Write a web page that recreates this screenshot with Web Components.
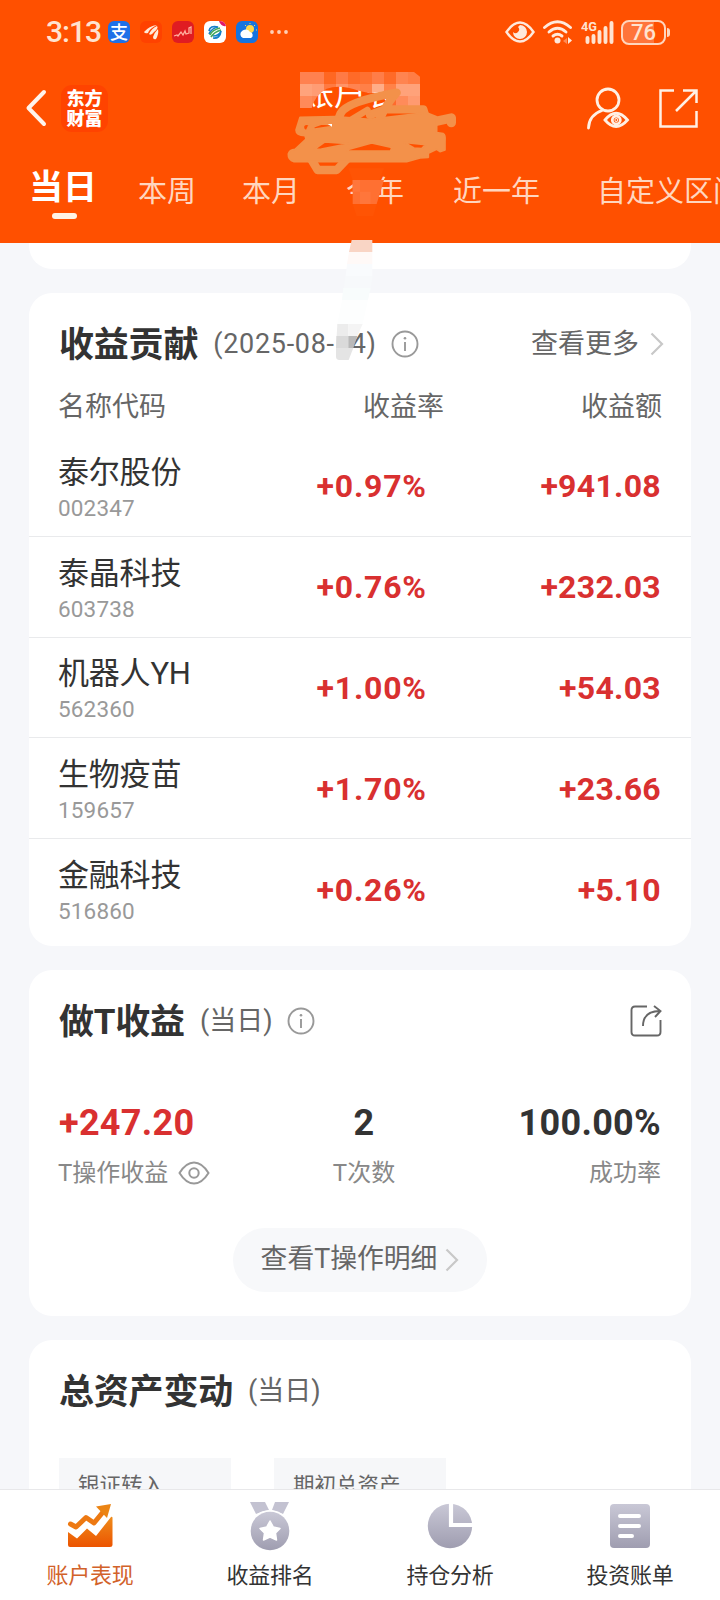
<!DOCTYPE html>
<html lang="zh-CN">
<head>
<meta charset="utf-8">
<meta name="viewport" content="width=device-width, initial-scale=1">
<title>账户表现</title>
<style>
    html, body { margin: 0; height: 100%; }
    body { background: #f6f7fa; font-family: Roboto, "Noto Sans CJK SC", sans-serif; color: #333; overflow: hidden; }
</style>
</head>
<body>
<account-page></account-page>

<script>
class BaseElement extends HTMLElement {
    constructor() {
        super();
        this.attachShadow({ mode: 'open' });
    }

    connectedCallback() {
        this.shadowRoot.innerHTML = this.render();
    }
}

class StatusBar extends BaseElement {
    render() {
        return `
        <style>
            :host { display: flex; align-items: center; justify-content: space-between; height: 64px; padding: 0 54px 0 46px; box-sizing: border-box; color: #ffe3d0; }
            .left, .right { display: flex; align-items: center; }
            .time { width: 62px; font-size: 30px; line-height: 64px; letter-spacing: -1px; font-weight: 500; white-space: nowrap; }
            .apps { display: flex; gap: 10px; }
            .app { width: 22px; height: 22px; border-radius: 6px; display: block; overflow: hidden; }
            .pay { overflow: visible; background: #1f70e8; color: #fff; font: 500 18px/21px "Noto Sans CJK SC", sans-serif; text-align: center; }
            .dots { margin-left: 12px; }
            svg { display: block; }
            .net { margin-left: 8px; }
            .battery { position: relative; width: 41px; height: 21px; border: 2px solid #ffd5bd; border-radius: 8px; margin-left: 7px; font-size: 22px; font-weight: 500; line-height: 22px; text-align: center; background: linear-gradient(90deg, #ff743a 76%, transparent 76%); }
            .battery::after { content: ""; position: absolute; left: 44px; top: 6px; width: 3px; height: 9px; border-radius: 0 3px 3px 0; background: #ffd5bd; }
        </style>
        <div class="left">
            <span class="time">3:13</span>
            <div class="apps">
                <span class="app pay">支</span>
                <svg class="app" viewBox="0 0 22 22"><rect width="22" height="22" fill="#ff4200"/><path d="M4 11Q9 5 17 4Q9 8 8 12Q5 13 4 11ZM9 13Q12 7 17 5Q19 7 14 11Q11 15 9 13ZM13 16Q14 12 18 8Q19 13 16 18Q13 19 13 16Z" fill="#ffe9d8"/></svg>
                <svg class="app" viewBox="0 0 22 22"><rect width="22" height="22" fill="#e01c22"/><path d="M2 15L5 14L6 15L9 11L11 14L13 10L14 13L17 12V7L19 6V13" fill="none" stroke="#ffb0a0" stroke-width="1.3"/></svg>
                <svg class="app" viewBox="0 0 22 22"><rect width="22" height="22" fill="#fff"/><path d="M15 0H22V5Q17 6 15 0Z" fill="#e0186a"/><g fill="none" stroke-width="1.7"><path d="M5 10Q6 4 14 6Q8 7 5 13" stroke="#1680c8"/><path d="M6 14Q8 9 16 7M7 16Q10 11 17 9" stroke="#44a85a"/><path d="M9 17Q16 18 17 10Q15 15 9 15" stroke="#1680c8"/></g></svg>
                <svg class="app" viewBox="0 0 22 22"><rect width="22" height="22" fill="#1574df"/><circle cx="14" cy="8" r="4" fill="#ffd84a"/><path d="M14 2V3M19 4L18 5M21 9H20M9 4L10 5" stroke="#ffd84a"/><path d="M7 17A4 4 0 0 1 6 10A5 5 0 0 1 14 11A3.2 3.2 0 0 1 15 17Z" fill="#fff"/></svg>
            </div>
            <svg class="dots" width="18" height="6" viewBox="0 0 18 6" fill="#ffd0b5"><circle cx="2" cy="3" r="1.9"/><circle cx="9" cy="3" r="1.9"/><circle cx="16" cy="3" r="1.9"/></svg>
        </div>
        <div class="right">
            <svg width="30" height="22" viewBox="0 0 30 22"><path d="M1.5 11Q8 1.5 15 1.5T28.5 11Q22 20.5 15 20.5T1.5 11Z" fill="none" stroke="#ffe9dc" stroke-width="2.4"/><path d="M15 4A7 7 0 1 1 8 11A3.5 3.5 0 1 0 13 6Q14 5 15 4Z" fill="#ffe9dc"/></svg>
            <svg class="net" width="30" height="24" viewBox="0 0 30 24"><g fill="none" stroke="#ffe9dc" stroke-width="2.9" stroke-linecap="round"><path d="M1.5 7.5Q14.5 -4 27.5 7.5"/><path d="M6 12Q14.5 4.500 23 12"/><path d="M10 16Q14.500 12.500 19 16"/></g><circle cx="14.500" cy="20.500" r="3" fill="#ffe9dc"/><path d="M24 18V24L20 21Z" fill="#ff8a55"/><path d="M25 17V24L29 20.500Z" fill="#ffe9dc"/></svg>
            <svg class="net" width="33" height="24" viewBox="0 0 33 24"><text x="0" y="10.500" font-size="13" font-weight="700" fill="#ffe3d0" textLength="16" lengthAdjust="spacingAndGlyphs">4G</text><path d="M6.500 18V22M12.500 16V22M18.500 12V22M24.500 8V22M30.500 3V22" stroke="#ffe3d0" stroke-width="3.900" stroke-linecap="round"/></svg>
            <span class="battery">76</span>
        </div>`;
    }
}

class NavBar extends BaseElement {
    render() {
        return `
        <style>
            :host { display: grid; grid-template-columns: 260px 1fr 260px; align-items: center; height: 88px; padding: 0 22px; box-sizing: border-box; color: #fff; }
            svg { display: block; }
            .side { display: flex; align-items: center; }
            .end { justify-content: flex-end; gap: 28px; }
            .logo { width: 47px; height: 47px; border-radius: 11px; background: #ff4300; margin-left: 13px; font: 900 18px/20px "Noto Sans CJK SC", sans-serif; text-align: center; padding-top: 2px; box-sizing: border-box; }
            .title { font-size: 32px; line-height: 32px; padding-bottom: 28px; text-align: left; margin-left: 20px; white-space: nowrap; }
        </style>
        <div class="side">
            <svg width="26" height="40" viewBox="0 0 26 40"><path d="M22 4L6.500 20L22 36" fill="none" stroke="#fff4ec" stroke-width="4" stroke-linecap="round" stroke-linejoin="round"/></svg>
            <div class="logo">东方<br>财富</div>
        </div>
        <div class="title">账户表</div>
        <div class="side end">
            <svg width="44" height="44" viewBox="0 0 44 44" fill="none" stroke="#fff0e4" stroke-width="2.800" stroke-linecap="round"><circle cx="22" cy="14" r="11"/><path d="M2.500 42Q3 29 16 24.500"/><path d="M19 34Q30 20.500 41.500 34Q30 47 19 34Z"/><circle cx="30.300" cy="34" r="4"/><circle cx="30.300" cy="34" r=".5"/></svg>
            <svg width="40" height="40" viewBox="0 0 40 40" fill="none" stroke="#fff0e4" stroke-width="2.500"><path d="M16 2.500H2.500V38.500H38.500V23"/><path d="M25 2.500H38.500V15M38 3L18 23"/></svg>
        </div>`;
    }
}

class PeriodTabs extends BaseElement {
    render() {
        return `
        <style>
            :host { display: flex; align-items: flex-start; height: 91px; padding-left: 29px; gap: 46px; box-sizing: border-box; overflow: hidden; font-size: 29px; line-height: 40px; color: #ffd6bf; white-space: nowrap; }
            span { flex: none; padding-top: 20px; }
            .active { font-size: 34px; font-weight: 700; color: #fff; padding-top: 15px; margin-right: -5px; }
            .active::after { content: ""; display: block; width: 25px; height: 6px; margin: 6px 0 0 23px; border-radius: 3px; background: #fff3e6; }
            .year { margin-left: 3px; }
            .wide { margin-left: 11px; }
        </style>
        <span class="active">当日</span>
        <span>本周</span>
        <span>本月</span>
        <span>今年</span>
        <span class="year">近一年</span>
        <span class="wide">自定义区间</span>`;
    }
}

/* mosaic blocks and brush marks lying over the header and the date */
class CensorMarks extends BaseElement {
    render() {
        const rows = [
            ['#ff8150', '#ff8150', '#ff6722', '#ff7a45', '#ff6a28', '#ff7030', '#ff7d48', '#ff6a28', '#ff8450', '#ff7d45'],
            ['#ffa37c', '#ff9c74', '#ff7a42', '#ff9468', '#ff8350', '#ff8048', '#ffad88', '#ff8248', '#ffa27a', '#ffa27a'],
            ['#ff8a5a', '#ff8450', '#ff6a2c', '#ff7a42', '#ff7a42', '#ff6a2c', '#ff7a42', '#ff6a2c', '#ff8b5a', '#ff9a70']
        ];
        const cells = rows.map((row, y) => row.map((c, x) =>
            `<rect x="${120 + x * 36}" y="${36 + y * 36}" width="36.500" height="36.500" fill="${c}"/>`).join('')).join('');
        return `
        <style>
            :host { position: absolute; left: 260px; top: 60px; pointer-events: none; }
            svg { display: block; }
        </style>
        <svg width="220" height="320" viewBox="0 0 660 960">
            <clipPath id="title"><path d="M120 36H462L480 50V144H385L412 100L385 92L330 100L296 92Q240 72 200 86Q165 105 155 144H120Z"/></clipPath>
            <g clip-path="url(#title)">${cells}</g>
            <g fill="none" stroke="#f3914a" stroke-linecap="round" stroke-linejoin="round">
                <path d="M410 98Q260 125 242 160L230 190M410 98Q380 130 358 180M330 165L375 148H490L498 175" stroke-width="25"/>
                <path d="M322 150L260 188" stroke-width="20"/>
                <path d="M155 300L173 330H230L262 296" stroke-width="25"/>
                <path d="M500 190L574 174L574 188" stroke-width="28"/>
            </g>
            <path fill="#f3914a" stroke="#f3914a" stroke-width="5" stroke-linejoin="round" fill-rule="evenodd" d="M120 172L225 170L330 178L500 158L530 170V218L550 221Q557 224 555 245V270L540 275L530 268L505 280V292L480 294L440 305H102Q84 300 85 282Q88 269 105 268L138 237L135 227Q108 226 108 210ZM130 200Q132 190 148 194L140 211Q130 211 130 200ZM162 200L185 192L215 194V200L160 208ZM194 246L268 251L184 267L163 268ZM265 268L335 249L395 262L392 273H262ZM432 247L497 254L485 266L462 264Z"/>
            <path d="M203 192H216V200Z" fill="#fff"/>
            <path d="M265 325H372L358 360H278ZM278 432H350L340 468H290Z" fill="#ff5404"/>
            <path d="M278 360H372L350 432H278Z" fill="#ff7032"/>
            <path d="M278 360H300V395H278ZM300 395H332V432H300Z" fill="#ff763b"/>
            <path d="M275 540H337V576H267Z" fill="#f9d5c5"/>
            <path d="M267 576H337V612H261Z" fill="#fff9f7"/>
            <path d="M261 612H337V648H257Z" fill="#f9fbfd"/>
            <path d="M257 648H337L332 684H252Z" fill="#f7f9fb"/>
            <path d="M250 684H332L324 720H246Z" fill="#f8fcfc"/>
            <path d="M246 720H324L308 792H232Z" fill="#fdfefe"/>
            <path d="M232 792H265V828H230Z" fill="#ececec"/>
            <path d="M265 792H308L292 828H265Z" fill="#f4f4f4"/>
            <path d="M229 828H265V864H228Z" fill="#dadada"/>
            <path d="M265 828H292L280 864H265Z" fill="#b9b9b9"/>
            <path d="M228 864H280L266 900H238Q228 898 228 890Z" fill="#e4e4e4"/>
        </svg>`;
    }
}

class InfoIcon extends BaseElement {
    render() {
        return `
        <style>:host { display: block; width: 28px; height: 28px; } svg { display: block; }</style>
        <svg width="28" height="28" viewBox="0 0 28 28"><circle cx="14" cy="14" r="12.500" fill="none" stroke="#999" stroke-width="1.900"/><path d="M14 12V21" stroke="#999" stroke-width="1.900"/><circle cx="14" cy="8.300" r="1.300" fill="#999"/></svg>`;
    }
}

class ArrowIcon extends BaseElement {
    render() {
        return `
        <style>:host { display: block; width: 14px; height: 24px; } svg { display: block; }</style>
        <svg width="14" height="24" viewBox="0 0 14 24"><path d="M1.500 1.500L12 12L1.500 22.500" fill="none" stroke="#c8c8c8" stroke-width="2.200"/></svg>`;
    }
}

class PanelCard extends BaseElement {
    render() {
        return `
        <style>
            :host { display: block; background: #fff; border-radius: 23px; margin: 0 29px 24px; box-sizing: border-box; }
            header { display: flex; align-items: center; height: 100px; padding: 0 29px 0 30px; }
            h2 { margin: 0 15px 0 0; padding-top: 6px; font-size: 35px; line-height: 50px; font-weight: 700; letter-spacing: -0.2px; white-space: nowrap; }
            .note { display: flex; align-items: center; gap: 14px; padding-top: 2px; font-size: 27px; line-height: 40px; color: #666; white-space: nowrap; }
            .action { margin-left: auto; padding-top: 2px; }
        </style>
        <header>
            <h2>${this.getAttribute('heading')}</h2>
            <div class="note"><slot name="note"></slot></div>
            <div class="action"><slot name="action"></slot></div>
        </header>
        <slot></slot>`;
    }
}

class StockRow extends BaseElement {
    render() {
        const a = name => this.getAttribute(name);
        return `
        <style>
            :host { display: grid; grid-template-columns: 201px 167px 235px; align-items: center; height: 100.750px; padding: 0 30px 0 29px; box-sizing: border-box; border-bottom: 1px solid #e9eaec; }
            :host(:last-of-type) { border-bottom: none; height: 106px; padding-bottom: 6px; }
            .name { font-size: 31px; line-height: 40px; letter-spacing: -0.2px; white-space: nowrap; margin-top: 3px; }
            .code { font-size: 22.500px; line-height: 28px; letter-spacing: 0.15px; color: #999; margin-top: 1px; }
            .value { text-align: right; font-size: 32px; line-height: 40px; font-weight: 700; letter-spacing: 0.3px; color: #d93030; padding-top: 1px; }
            .rate { letter-spacing: 0.8px; margin-right: -0.8px; }
        </style>
        <div><div class="name">${a('name')}</div><div class="code">${a('code')}</div></div>
        <div class="value rate">${a('rate')}</div>
        <div class="value">${a('amount')}</div>`;
    }
}

class ContributionCard extends BaseElement {
    render() {
        const stocks = [
            ['泰尔股份', '002347', '+0.97%', '+941.08'],
            ['泰晶科技', '603738', '+0.76%', '+232.03'],
            ['机器人YH', '562360', '+1.00%', '+54.03'],
            ['生物疫苗', '159657', '+1.70%', '+23.66'],
            ['金融科技', '516860', '+0.26%', '+5.10']
        ];
        return `
        <style>
            :host { display: block; }
            panel-card { height: 653px; }
            .date { display: flex; letter-spacing: 0.7px; }
            .gap { width: 16px; }
            .more { display: flex; align-items: center; gap: 11px; font-size: 27px; line-height: 40px; color: #666; margin-right: -2px; }
            .cols { display: grid; grid-template-columns: 201px 185px 218px; padding: 0 29px; height: 43px; font-size: 27px; line-height: 28px; color: #666; }
            .cols span { text-align: right; }
            .cols span:first-child { text-align: left; }
        </style>
        <panel-card heading="收益贡献">
            <span slot="note" class="date">(2025-08-<i class="gap"></i>4)</span>
            <info-icon slot="note"></info-icon>
            <div slot="action" class="more">查看更多<arrow-icon></arrow-icon></div>
            <div class="cols"><span>名称代码</span><span>收益率</span><span>收益额</span></div>
            ${stocks.map(s => `<stock-row name="${s[0]}" code="${s[1]}" rate="${s[2]}" amount="${s[3]}"></stock-row>`).join('')}
        </panel-card>`;
    }
}

class TradeCard extends BaseElement {
    render() {
        return `
        <style>
            :host { display: block; }
            panel-card { height: 346px; }
            svg { display: block; }
            .stats { display: grid; grid-template-columns: 209px 192px 201px; padding: 30px 30px 0; text-align: center; }
            .stats > :first-child { text-align: left; }
            .stats > :last-child { text-align: right; }
            b { display: block; font-size: 36px; line-height: 46px; letter-spacing: 0.3px; white-space: nowrap; }
            .red { color: #d93030; }
            .label { display: block; font-size: 24px; line-height: 34px; color: #888; margin-top: 10px; }
            .flex { display: flex; align-items: center; gap: 10px; margin-left: -1px; }
            .detail { display: flex; align-items: center; justify-content: center; gap: 8px; width: 254px; height: 64px; border-radius: 32px; background: #f7f8fa; margin: 38px auto 0; font-size: 26.800px; line-height: 40px; color: #666; white-space: nowrap; }
            .detail span { padding-bottom: 3px; }
        </style>
        <panel-card heading="做T收益">
            <span slot="note">(当日)</span>
            <info-icon slot="note"></info-icon>
            <svg slot="action" width="32" height="32" viewBox="0 0 32 32" fill="none" stroke="#666" stroke-width="1.900"><path d="M17 1.500H5Q1.500 1.500 1.500 5V27Q1.500 30.500 5 30.500H27Q30.500 30.500 30.500 27V15"/><path d="M13 21Q13 6 30 6M24 1L30.500 6L25 12"/></svg>
            <div class="stats">
                <div><b class="red">+247.20</b><span class="label flex">T操作收益
                    <svg width="32" height="24" viewBox="0 0 32 24" fill="none" stroke="#999" stroke-width="2"><path d="M1.500 12Q8 1.500 16 1.500T30.500 12Q24 22.500 16 22.500T1.500 12Z"/><circle cx="16" cy="12" r="4.700"/></svg></span></div>
                <div><b>2</b><span class="label">T次数</span></div>
                <div><b>100.00%</b><span class="label">成功率</span></div>
            </div>
            <div class="detail"><span>查看T操作明细</span><arrow-icon></arrow-icon></div>
        </panel-card>`;
    }
}

class AssetCard extends BaseElement {
    render() {
        return `
        <style>
            :host { display: block; }
            panel-card { height: 300px; }
            .boxes { display: flex; gap: 43px; padding: 18px 30px 0; }
            .box { width: 172px; height: 100px; box-sizing: border-box; padding: 11px 19px; background: #f6f7f9; font-size: 21.500px; line-height: 34px; color: #666; white-space: nowrap; }
        </style>
        <panel-card heading="总资产变动">
            <span slot="note">(当日)</span>
            <div class="boxes"><div class="box">银证转入</div><div class="box">期初总资产</div></div>
        </panel-card>`;
    }
}

class BottomBar extends BaseElement {
    render() {
        return `
        <style>
            :host { display: grid; grid-template-columns: repeat(4, 1fr); height: 111px; flex: none; background: #fff; border-top: 1px solid #e8e8ea; box-sizing: border-box; position: relative; }
            .item { display: flex; flex-direction: column; align-items: center; padding-top: 11px; font-size: 22px; line-height: 30px; letter-spacing: -0.2px; }
            .item svg { display: block; margin-bottom: 10px; }
            .active { color: #d2622a; }
        </style>
        <div class="item active">
            <svg width="50" height="50" viewBox="0 0 50 50">
                <defs><linearGradient id="o" x2="0" y2="1"><stop stop-color="#ee8c1c"/><stop offset="1" stop-color="#ec5400"/></linearGradient></defs>
                <path d="M3 31L12 37.500L22 27.500L31 35L46 16Q47.500 15 47.500 17V44Q47.500 46 45 46H5Q3 46 3 44Z" fill="url(#o)"/>
                <path d="M5.500 23L11 26L21 16.500L29 22L38 11" fill="none" stroke="#ed7912" stroke-width="5" stroke-linecap="round" stroke-linejoin="round"/>
                <path d="M31 5.500L46 3L42 17Z" fill="#eb8414"/>
            </svg>
            账户表现
        </div>
        <div class="item">
            <svg width="50" height="50" viewBox="0 0 50 50">
                <defs><linearGradient id="g" x2="0" y2="1"><stop stop-color="#c9c8d6"/><stop offset="1" stop-color="#9f9db0"/></linearGradient></defs>
                <path d="M5 1H20L24 9L16 11L11 13ZM30 1H44L38 13L27 9Z" fill="#c3c2d1"/>
                <circle cx="25" cy="30" r="21" fill="#fff"/>
                <circle cx="25" cy="30" r="19.300" fill="url(#g)"/>
                <path d="M25 20L28.300 26L35 27.500L30.500 32L31.500 39L25 36L18.500 39L19.500 32L15 27.500L21.700 26Z" fill="#fff" stroke="#fff" stroke-width="1.500" stroke-linejoin="round"/>
            </svg>
            收益排名
        </div>
        <div class="item">
            <svg width="50" height="50" viewBox="0 0 50 50">
                <defs><linearGradient id="g" x2="0" y2="1"><stop stop-color="#c9c8d6"/><stop offset="1" stop-color="#9f9db0"/></linearGradient></defs>
                <circle cx="25" cy="25" r="22.200" fill="url(#g)"/><path d="M26 2V24H48" fill="none" stroke="#fff" stroke-width="4.200"/>
            </svg>
            持仓分析
        </div>
        <div class="item">
            <svg width="50" height="50" viewBox="0 0 50 50">
                <defs><linearGradient id="g" x2="0" y2="1"><stop stop-color="#c9c8d6"/><stop offset="1" stop-color="#9f9db0"/></linearGradient></defs>
                <rect x="5" y="3" width="40" height="44" rx="4" fill="url(#g)"/><path d="M15 15H34M15 25H34M15 35H27" stroke="#fff" stroke-width="4" stroke-linecap="round"/>
            </svg>
            投资账单
        </div>`;
    }
}

class AccountPage extends BaseElement {
    render() {
        return `
        <style>
            :host { display: flex; flex-direction: column; position: relative; width: 720px; height: 1600px; overflow: hidden; background: #f6f7fa; }
            .head { flex: none; background: #ff5000; height: 243px; }
            main { flex: 1; min-height: 0; overflow: hidden; }
            .previous { height: 26px; margin: 0 29px 24px; background: #fff; border-radius: 0 0 23px 23px; }
        </style>
        <div class="head">
            <status-bar></status-bar>
            <nav-bar></nav-bar>
            <period-tabs></period-tabs>
        </div>
        <main>
            <div class="previous"></div>
            <contribution-card></contribution-card>
            <trade-card></trade-card>
            <asset-card></asset-card>
        </main>
        <bottom-bar></bottom-bar>
        <censor-marks></censor-marks>`;
    }
}

customElements.define('status-bar', StatusBar);
customElements.define('nav-bar', NavBar);
customElements.define('period-tabs', PeriodTabs);
customElements.define('censor-marks', CensorMarks);
customElements.define('info-icon', InfoIcon);
customElements.define('arrow-icon', ArrowIcon);
customElements.define('panel-card', PanelCard);
customElements.define('stock-row', StockRow);
customElements.define('contribution-card', ContributionCard);
customElements.define('trade-card', TradeCard);
customElements.define('asset-card', AssetCard);
customElements.define('bottom-bar', BottomBar);
customElements.define('account-page', AccountPage);
</script>
</body>
</html>
